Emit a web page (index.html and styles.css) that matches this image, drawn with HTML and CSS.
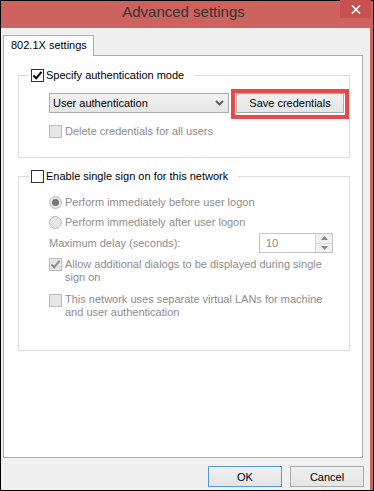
FILE: index.html
```html
<!DOCTYPE html>
<html lang="en">
<head>
<meta charset="utf-8">
<title>Advanced settings</title>
<link rel="stylesheet" href="styles.css">
</head>
<body>
<div class="window">
  <div class="titlebar">
    <span class="title">Advanced settings</span>
    <span class="close" aria-label="Close">
      <svg width="10" height="9" viewBox="0 0 10 9"><path d="M1 0.5 L9 8.5 M9 0.5 L1 8.5" stroke="#fff" stroke-width="1.6" fill="none"/></svg>
    </span>
  </div>
  <div class="body">
    <div class="tabs"><div class="tab">802.1X settings</div></div>
    <div class="panel">
      <fieldset class="group group-auth">
        <legend class="legend">
          <span class="cb">
            <svg width="11" height="11" viewBox="0 0 11 11"><path d="M1.5 5.5 L4.2 8.3 L9.5 1.8" stroke="#000" stroke-width="2" fill="none"/></svg>
          </span>
          <span>Specify authentication mode</span>
        </legend>
        <div class="group-body">
          <div class="select-row">
            <div class="select">
              <span>User authentication</span>
              <svg class="chev" width="9" height="6" viewBox="0 0 9 6"><path d="M1 1 L4.5 4.5 L8 1" stroke="#5a5a5a" stroke-width="1.8" fill="none"/></svg>
            </div>
            <div class="btn-wrap">
              <div class="btn btn-save">Save credentials</div>
              <span class="highlight"></span>
            </div>
          </div>
          <div class="opt opt-delete disabled">
            <span class="cb cb-dis"></span>
            <span>Delete credentials for all users</span>
          </div>
        </div>
      </fieldset>

      <fieldset class="group group-sso">
        <legend class="legend legend-sso">
          <span class="cb"></span>
          <span>Enable single sign on for this network</span>
        </legend>
        <div class="group-body">
          <div class="opt opt-radio1 disabled">
            <span class="rb rb-on"></span>
            <span>Perform immediately before user logon</span>
          </div>
          <div class="opt opt-radio2 disabled">
            <span class="rb"></span>
            <span>Perform immediately after user logon</span>
          </div>
          <div class="delay-row disabled">
            <span class="delay-label">Maximum delay (seconds):</span>
            <div class="spin">
              <span class="spin-value">10</span>
              <span class="spin-btns">
                <span class="spin-btn"><svg width="7" height="4" viewBox="0 0 7 4"><path d="M0 4 L3.5 0 L7 4 Z" fill="#8a8a8a"/></svg></span>
                <span class="spin-btn"><svg width="7" height="4" viewBox="0 0 7 4"><path d="M0 0 L7 0 L3.5 4 Z" fill="#8a8a8a"/></svg></span>
              </span>
            </div>
          </div>
          <div class="opt multi opt-allow disabled">
            <span class="cb cb-dis">
              <svg width="11" height="11" viewBox="0 0 11 11"><path d="M1.5 5.5 L4.2 8.3 L9.5 1.8" stroke="#8a8a8a" stroke-width="2" fill="none"/></svg>
            </span>
            <span class="label">Allow additional dialogs to be displayed during single sign on</span>
          </div>
          <div class="opt multi opt-vlan disabled">
            <span class="cb cb-dis cb-mid"></span>
            <span class="label">This network uses separate virtual LANs for machine and user authentication</span>
          </div>
        </div>
      </fieldset>
    </div>
    <div class="footer">
      <div class="btn btn-dlg btn-default">OK</div>
      <div class="btn btn-dlg">Cancel</div>
    </div>
  </div>
</div>
</body>
</html>
```

FILE: styles.css
```css
* { box-sizing: border-box; }
html, body { margin: 0; padding: 0; }
body {
  font-family: "Liberation Sans", Arial, sans-serif;
  font-size: 11px;
  color: #000;
  background: #fff;
}
.window {
  width: 374px;
  height: 491px;
  border: 1px solid #000;
  background: #cd625f;
  display: flex;
  flex-direction: column;
}
.titlebar {
  height: 27px;
  flex: none;
  position: relative;
}
.title {
  display: block;
  font-size: 15px;
  line-height: 22px;
  text-align: center;
  padding-right: 7px;
  color: #333;
}
.close {
  position: absolute;
  top: -1px;
  right: 2px;
  width: 31px;
  height: 18px;
  background: #c75050;
  display: flex;
  align-items: center;
  justify-content: center;
}
.body {
  flex: 1;
  background: #f0f0f0;
  margin-right: 3px;
  padding: 7px 0 0 2px;
  display: flex;
  flex-direction: column;
}
.tabs { display: flex; }
.tab {
  width: 91px;
  height: 21px;
  border: 1px solid #adadad;
  border-bottom: 0;
  background: #fff;
  line-height: 18px;
  padding-left: 7px;
  margin-bottom: -1px;
  position: relative;
  z-index: 1;
}
.panel {
  width: 360px;
  height: 403px;
  border: 1px solid #adadad;
  background: #fff;
}
.group {
  margin: 12px 12px 0 14px;
  border: 1px solid #dcdcdc;
  padding: 0 0 19px 10px;
  min-width: 0;
}
.group-sso {
  margin-top: 11px;
  padding-bottom: 31px;
}
.legend {
  padding: 0 10px 0 2px;
  display: flex;
  align-items: center;
  gap: 2px;
  height: 14px;
  line-height: 14px;
}
.group-body { padding-left: 20px; }
.cb {
  width: 13px;
  height: 13px;
  border: 1px solid #333;
  background: #fff;
  flex: none;
  display: flex;
  align-items: center;
  justify-content: center;
}
.cb-dis {
  border-color: #bcbcbc;
  background: #e6e6e6;
}
.rb {
  width: 13px;
  height: 13px;
  border: 1px solid #bcbcbc;
  border-radius: 50%;
  background: #e6e6e6;
  flex: none;
  display: flex;
  align-items: center;
  justify-content: center;
}
.rb-on::after {
  content: "";
  width: 7px;
  height: 7px;
  border-radius: 50%;
  background: #777;
}
.select-row {
  margin-top: 11px;
  display: flex;
  gap: 7px;
  height: 20px;
}
.select {
  width: 180px;
  height: 20px;
  border: 1px solid #acacac;
  background: linear-gradient(#f2f2f2, #e5e5e5);
  display: flex;
  align-items: center;
  justify-content: space-between;
  padding: 0 3px 0 3px;
  line-height: 18px;
}
.chev { margin-right: 1px; }
.btn-wrap { position: relative; }
.btn {
  border: 1px solid #acacac;
  background: linear-gradient(#f0f0f0, #e5e5e5);
  display: flex;
  align-items: center;
  justify-content: center;
}
.btn-save {
  width: 108px;
  height: 20px;
}
.highlight {
  position: absolute;
  left: -5px;
  top: -4px;
  width: 118px;
  height: 30px;
  border: 4px solid #e84a4a;
}
.opt {
  display: flex;
  align-items: center;
  gap: 3px;
  height: 13px;
  line-height: 13px;
}
.disabled { color: #8d8d8d; }
.opt-delete { margin-top: 12px; }
.opt-radio1 { margin-top: 13px; }
.opt-radio2 { margin-top: 7px; }
.delay-row {
  margin-top: 4px;
  display: flex;
  align-items: center;
  height: 20px;
}
.delay-label { width: 210px; }
.spin {
  width: 74px;
  height: 20px;
  border: 1px solid #c5c5c5;
  background: #fff;
  display: flex;
  align-items: center;
}
.spin-value {
  flex: 1;
  padding-left: 6px;
}
.spin-btns {
  width: 17px;
  height: 18px;
  display: flex;
  flex-direction: column;
  border-left: 1px solid #dadada;
  background: #f0f0f0;
}
.spin-btn {
  flex: 1;
  display: flex;
  align-items: center;
  justify-content: center;
}
.spin-btn + .spin-btn { border-top: 1px solid #dadada; }
.opt.multi {
  height: auto;
  align-items: flex-start;
}
.label { width: 260px; }
.opt-allow { margin-top: 5px; }
.opt-vlan { margin-top: 9px; }
.opt-vlan { align-items: center; }
.cb-mid { margin-top: 1px; }
.footer {
  margin-top: 8px;
  display: flex;
  justify-content: flex-end;
  gap: 8px;
  padding-right: 6px;
}
.btn-dlg {
  width: 74px;
  height: 21px;
}
.btn-default { border-color: #4d9de0; }
```
